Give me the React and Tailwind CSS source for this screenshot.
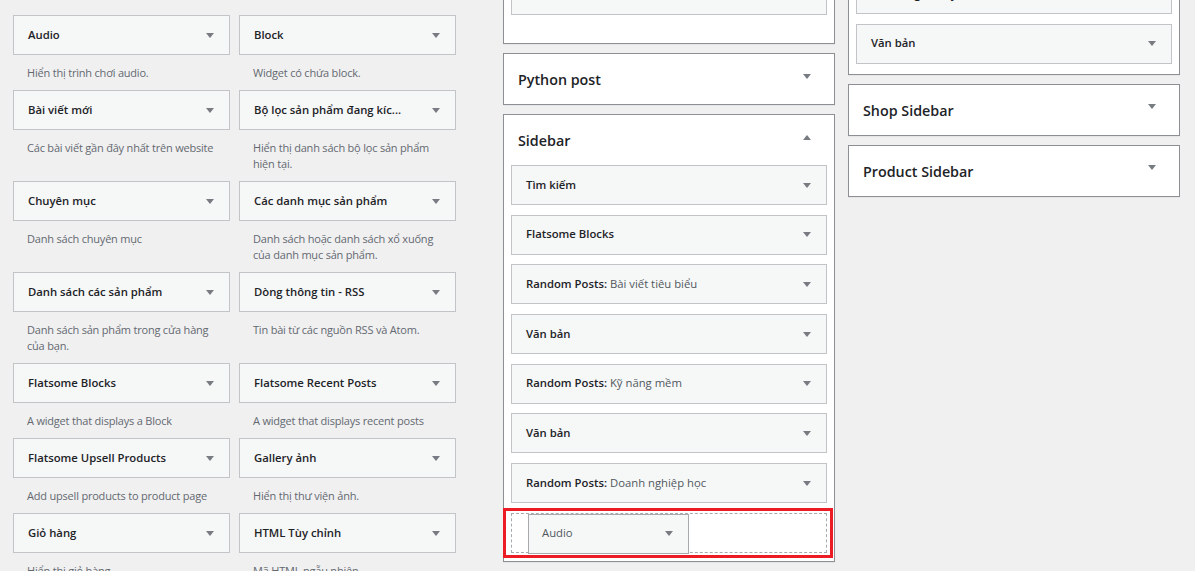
import React from 'react';

const availableWidgets = [
  { title: 'Audio', desc: ['Hiển thị trình chơi audio.'] },
  { title: 'Block', desc: ['Widget có chứa block.'] },
  { title: 'Bài viết mới', desc: ['Các bài viết gần đây nhất trên website'] },
  { title: 'Bộ lọc sản phẩm đang kíc...', desc: ['Hiển thị danh sách bộ lọc sản phẩm', 'hiện tại.'] },
  { title: 'Chuyên mục', desc: ['Danh sách chuyên mục'] },
  { title: 'Các danh mục sản phẩm', desc: ['Danh sách hoặc danh sách xổ xuống', 'của danh mục sản phẩm.'] },
  { title: 'Danh sách các sản phẩm', desc: ['Danh sách sản phẩm trong cửa hàng', 'của bạn.'] },
  { title: 'Dòng thông tin - RSS', desc: ['Tin bài từ các nguồn RSS và Atom.'] },
  { title: 'Flatsome Blocks', desc: ['A widget that displays a Block'] },
  { title: 'Flatsome Recent Posts', desc: ['A widget that displays recent posts'] },
  { title: 'Flatsome Upsell Products', desc: ['Add upsell products to product page'] },
  { title: 'Gallery ảnh', desc: ['Hiển thị thư viện ảnh.'] },
  { title: 'Giỏ hàng', desc: ['Hiển thị giỏ hàng.'] },
  { title: 'HTML Tùy chỉnh', desc: ['Mã HTML ngẫu nhiên.'] },
];

const sidebarWidgets = [
  { title: 'Tìm kiếm' },
  { title: 'Flatsome Blocks' },
  { title: 'Random Posts:', sub: 'Bài viết tiêu biểu' },
  { title: 'Văn bản' },
  { title: 'Random Posts:', sub: 'Kỹ năng mềm' },
  { title: 'Văn bản' },
  { title: 'Random Posts:', sub: 'Doanh nghiệp học' },
];

function Arrow({ up, className = '' }) {
  return (
    <svg width="8" height="5" viewBox="0 0 8 5" className={`shrink-0 ${className}`}>
      <path d={up ? 'M0 5L4 0L8 5Z' : 'M0 0L8 0L4 5Z'} fill="#787c82" />
    </svg>
  );
}

function WidgetTop({ title, sub }) {
  return (
    <div className="h-[40px] border border-[#c3c4c7] bg-[#f6f7f7] flex items-center justify-between pl-[14px] pr-[15px]">
      <span className="text-[11.3px] font-semibold text-[#1d2327] whitespace-nowrap">
        {title}
        {sub && <span className="font-normal text-[#50575e]"> {sub}</span>}
      </span>
      <Arrow />
    </div>
  );
}

function SidebarHeader({ title, open }) {
  return (
    <div className="h-[50px] flex items-center justify-between pl-[14px] pr-[23px] pt-[2px]">
      <h2 className="text-[14.3px] font-semibold text-[#1d2327]">{title}</h2>
      <Arrow up={open} className="-mt-[8px]" />
    </div>
  );
}

function SidebarBox({ children, className = '' }) {
  return (
    <div className={`border border-[#8c8f94] bg-white shadow-[0_1px_1px_rgba(0,0,0,0.04)] ${className}`}>
      {children}
    </div>
  );
}

export default function App() {
  return (
    <div
      className="h-[571px] overflow-hidden bg-[#f0f0f1] flex items-start pl-[13px]"
      style={{ fontFamily: '"Open Sans", "Noto Sans", sans-serif' }}
    >
      {/* available widgets */}
      <div className="grid grid-cols-[217px_217px] gap-x-[9px] pt-[15px]">
        {availableWidgets.map((w, i) => (
          <div key={i}>
            <WidgetTop title={w.title} />
            <div className="pt-[10px] pb-[9px] pl-[14px] text-[11px] tracking-[-0.2px] leading-[16px] text-[#646970]">
              {w.desc.map((line, j) => (
                <div key={j} className="whitespace-nowrap">{line}</div>
              ))}
            </div>
          </div>
        ))}
      </div>

      {/* middle sidebars */}
      <div className="w-[332px] ml-[47px] -mt-[26px] flex flex-col gap-[9px]">
        <SidebarBox className="px-[7px] pb-[28px]">
          <WidgetTop title="Văn bản" />
        </SidebarBox>
        <SidebarBox>
          <SidebarHeader title="Python post" />
        </SidebarBox>
        <SidebarBox>
          <SidebarHeader title="Sidebar" open />
          <div className="px-[7px] pb-[8px] flex flex-col gap-[9.7px]">
            {sidebarWidgets.map((w, i) => (
              <WidgetTop key={i} title={w.title} sub={w.sub} />
            ))}
            <div className="relative h-[40px] border border-dashed border-[#a7aaad]">
              <div className="absolute left-[16px] top-0 w-[161px] h-[40px] border border-[#a7aaad] bg-[#f6f7f7] flex items-center justify-between pl-[13px] pr-[15px]">
                <span className="text-[11.3px] text-[#50575e]">Audio</span>
                <Arrow />
              </div>
              <div className="absolute -left-[9px] -top-[6px] -right-[7px] -bottom-[6px] border-[3px] border-[#ed1c24]" />
            </div>
          </div>
        </SidebarBox>
      </div>

      {/* right sidebars */}
      <div className="w-[332px] ml-[13px] -mt-[27px] flex flex-col gap-[9px]">
        <SidebarBox className="px-[7px] pb-[10px]">
          <div className="flex flex-col gap-[9.7px]">
            <WidgetTop title="Bài viết gần đây" />
            <WidgetTop title="Văn bản" />
          </div>
        </SidebarBox>
        <SidebarBox>
          <SidebarHeader title="Shop Sidebar" />
        </SidebarBox>
        <SidebarBox>
          <SidebarHeader title="Product Sidebar" />
        </SidebarBox>
      </div>
    </div>
  );
}
